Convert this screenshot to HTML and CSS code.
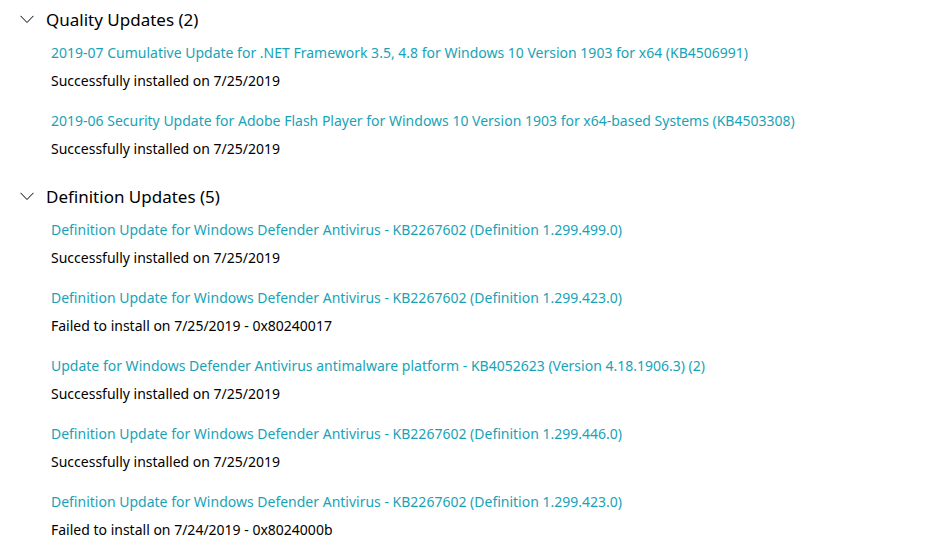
FILE: index.html
```html
<!DOCTYPE html>
<html lang="en">
<head>
    <meta charset="UTF-8">
    <title>Update history</title>
    <link rel="stylesheet" href="styles.css">
</head>
<body>

    <div class="group">
        <h2 class="group-title">
            <svg class="chevron" width="14" height="9" viewBox="0 0 14 9"><path d="M0.5 0.8 L7 7.5 L13.5 0.8" fill="none" stroke="#000" stroke-width="1"/></svg>
            Quality Updates (2)
        </h2>
        <div class="item">
            <a href="#" class="link">2019-07 Cumulative Update for .NET Framework 3.5, 4.8 for Windows 10 Version 1903 for x64 (KB4506991)</a>
            <p class="status">Successfully installed on 7/25/2019</p>
        </div>
        <div class="item">
            <a href="#" class="link">2019-06 Security Update for Adobe Flash Player for Windows 10 Version 1903 for x64-based Systems (KB4503308)</a>
            <p class="status">Successfully installed on 7/25/2019</p>
        </div>
    </div>

    <div class="group">
        <h2 class="group-title">
            <svg class="chevron" width="14" height="9" viewBox="0 0 14 9"><path d="M0.5 0.8 L7 7.5 L13.5 0.8" fill="none" stroke="#000" stroke-width="1"/></svg>
            Definition Updates (5)
        </h2>
        <div class="item">
            <a href="#" class="link">Definition Update for Windows Defender Antivirus - KB2267602 (Definition 1.299.499.0)</a>
            <p class="status">Successfully installed on 7/25/2019</p>
        </div>
        <div class="item">
            <a href="#" class="link">Definition Update for Windows Defender Antivirus - KB2267602 (Definition 1.299.423.0)</a>
            <p class="status">Failed to install on 7/25/2019 - 0x80240017</p>
        </div>
        <div class="item">
            <a href="#" class="link">Update for Windows Defender Antivirus antimalware platform - KB4052623 (Version 4.18.1906.3) (2)</a>
            <p class="status">Successfully installed on 7/25/2019</p>
        </div>
        <div class="item">
            <a href="#" class="link">Definition Update for Windows Defender Antivirus - KB2267602 (Definition 1.299.446.0)</a>
            <p class="status">Successfully installed on 7/25/2019</p>
        </div>
        <div class="item">
            <a href="#" class="link">Definition Update for Windows Defender Antivirus - KB2267602 (Definition 1.299.423.0)</a>
            <p class="status">Failed to install on 7/24/2019 - 0x8024000b</p>
        </div>
    </div>

</body>
</html>
```

FILE: styles.css
```css
body {
    margin: 0;
    padding: 5px 0 0 20px;
    background: #fff;
    color: #000;
    font-family: "Noto Sans", "Open Sans", sans-serif;
    font-size: 14px;
}
.group {
    margin-bottom: 19px;
}
.group-title {
    display: flex;
    align-items: center;
    margin: 0;
    height: 28px;
    font-size: 17px;
    font-weight: normal;
}
.chevron {
    margin-right: 12px;
    margin-top: 1px;
}
.item {
    padding-left: 31px;
    margin-top: 12px;
}
.item:first-of-type {
    margin-top: 6px;
}
.link {
    display: block;
    height: 28px;
    line-height: 28px;
    color: #17a3b7;
    text-decoration: none;
}
.status {
    margin: 0;
    height: 28px;
    line-height: 28px;
}
```
